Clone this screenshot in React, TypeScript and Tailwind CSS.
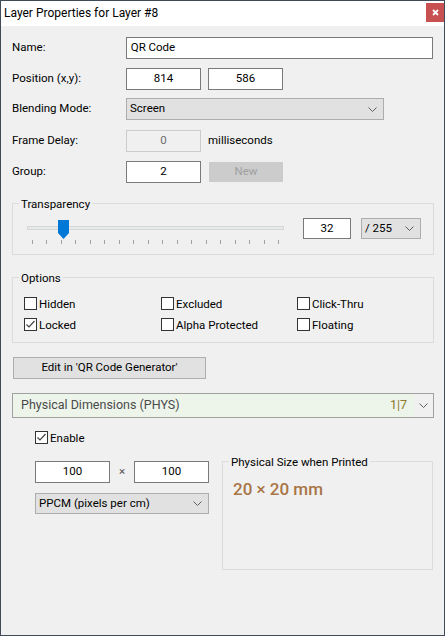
import React from "react";

const font = { fontFamily: 'Roboto, "Noto Sans", sans-serif' };

function Chevron({ className = "" }: { className?: string }) {
  return (
    <svg width="9" height="5" viewBox="0 0 9 5" className={className}>
      <polyline points="0.5,0.5 4.5,4.5 8.5,0.5" fill="none" stroke="#606060" strokeWidth="1" />
    </svg>
  );
}

function CheckBox({ checked = false, label }: { checked?: boolean; label: string }) {
  return (
    <div className="flex items-center h-[13px]">
      <div className="w-[13px] h-[13px] border border-[#333333] bg-white flex items-center justify-center shrink-0">
        {checked && (
          <svg width="11" height="11" viewBox="0 0 11 11">
            <polyline points="1.5,5.5 4,8 9.5,2" fill="none" stroke="#444444" strokeWidth="1.2" />
          </svg>
        )}
      </div>
      <span className="ml-[2px] text-[11.5px] leading-[16px] text-black">{label}</span>
    </div>
  );
}

function GroupBox({
  title,
  className = "",
  children,
}: {
  title: string;
  className?: string;
  children?: React.ReactNode;
}) {
  return (
    <div className={`relative border border-[#dcdcdc] ${className}`}>
      <span className="absolute left-[6px] -top-[8px] px-[2px] bg-[#f0f0f0] text-[11.5px] leading-[16px] text-black">
        {title}
      </span>
      {children}
    </div>
  );
}

function Field({
  value,
  className = "",
  align = "center",
  disabled = false,
}: {
  value: string;
  className?: string;
  align?: "center" | "left";
  disabled?: boolean;
}) {
  return (
    <div
      className={`h-[22px] border flex items-center text-[11.5px] ${
        disabled ? "border-[#cccccc] bg-[#f0f0f0] text-[#6d6d6d]" : "border-[#7a7a7a] bg-white text-black"
      } ${align === "center" ? "justify-center" : "justify-start pl-[4px]"} ${className}`}
    >
      {value}
    </div>
  );
}

function Select({ value, className = "" }: { value: string; className?: string }) {
  return (
    <div
      className={`border border-[#adadad] bg-[#e1e1e1] flex items-center justify-between pl-[3px] pr-[6px] text-[11.5px] text-black ${className}`}
    >
      <span>{value}</span>
      <Chevron />
    </div>
  );
}

function Row({ label, children, className = "" }: { label: string; children: React.ReactNode; className?: string }) {
  return (
    <div className={`flex items-center ${className}`}>
      <span className="w-[114px] text-[11.5px] text-black">{label}</span>
      {children}
    </div>
  );
}

export default function App() {
  const ticks = Array.from({ length: 18 });
  return (
    <div style={font} className="w-[445px] h-[636px] border border-[#3f4c58] bg-[#f0f0f0] flex flex-col overflow-hidden">
      {/* title bar */}
      <div className="h-[25px] bg-white flex items-start justify-between shrink-0">
        <span className="pl-[3px] pt-[4px] text-[12px] leading-[16px] text-black">Layer Properties for Layer #8</span>
        <div className="mt-[2px] w-[18px] h-[19px] bg-[#c75050] flex items-center justify-center">
          <svg width="7" height="7" viewBox="0 0 7 7">
            <path d="M1 1 L6 6 M6 1 L1 6" stroke="white" strokeWidth="1.8" />
          </svg>
        </div>
      </div>

      <div className="flex flex-col px-[11px]">
        <Row label="Name:" className="mt-[11px]">
          <Field value="QR Code" align="left" className="w-[308px]" />
        </Row>
        <Row label="Position (x,y):" className="mt-[9px]">
          <Field value="814" className="w-[75px]" />
          <Field value="586" className="w-[75px] ml-[7px]" />
        </Row>
        <Row label="Blending Mode:" className="mt-[8px]">
          <Select value="Screen" className="w-[258px] h-[22px]" />
        </Row>
        <Row label="Frame Delay:" className="mt-[10px]">
          <Field value="0" disabled className="w-[75px]" />
          <span className="ml-[7px] text-[11.5px] text-black">milliseconds</span>
        </Row>
        <Row label="Group:" className="mt-[9px]">
          <Field value="2" className="w-[75px]" />
          <div className="ml-[8px] w-[74px] h-[20px] bg-[#cccccc] flex items-center justify-center text-[11.5px] text-[#a0a0a0]">
            New
          </div>
        </Row>

        {/* transparency */}
        <GroupBox title="Transparency" className="mt-[20px] w-[422px] h-[52px]">
          <div className="flex items-start pt-[14px] pl-[14px]">
            <div className="relative w-[257px] h-[26px]">
              <div className="mt-[8px] h-[4px] border border-[#d6d6d6] bg-[#e7eaea]" />
              <div className="mt-[10px] ml-[5px] w-[247px] flex justify-between">
                {ticks.map((_, i) => (
                  <div key={i} className="w-px h-[4px] bg-[#a0a0a0]" />
                ))}
              </div>
              <svg className="absolute left-[31px] top-[2px]" width="11" height="19" viewBox="0 0 11 19">
                <polygon points="0,0 11,0 11,13 5.5,19 0,13" fill="#0078d7" />
              </svg>
            </div>
            <Field value="32" className="ml-[19px] w-[48px] !h-[21px]" />
            <Select value="/ 255" className="ml-[10px] w-[60px] h-[21px]" />
          </div>
        </GroupBox>

        {/* options */}
        <GroupBox title="Options" className="mt-[22px] w-[422px] h-[66px]">
          <div className="grid grid-cols-[137px_136px_1fr] gap-y-[8px] pt-[19px] pl-[11px]">
            <CheckBox label="Hidden" />
            <CheckBox label="Excluded" />
            <CheckBox label="Click-Thru" />
            <CheckBox label="Locked" checked />
            <CheckBox label="Alpha Protected" />
            <CheckBox label="Floating" />
          </div>
        </GroupBox>

        <div className="mt-[14px] ml-[1px] w-[193px] h-[22px] border border-[#adadad] bg-[#e1e1e1] flex items-center justify-center text-[11.5px] text-black">
          Edit in 'QR Code Generator'
        </div>

        {/* chunk header */}
        <div className="mt-[14px] w-[422px] h-[25px] border border-[#a0a0a0] flex items-stretch">
          <div className="flex-1 bg-[#edf5ea] flex items-center justify-between pl-[8px] pr-[7px]">
            <span className="text-[12.5px] text-[#4a4a4a]">Physical Dimensions (PHYS)</span>
            <span className="text-[12.5px] text-[#8c7a2e]">1|7</span>
          </div>
          <div className="w-[19px] flex items-center justify-center">
            <Chevron />
          </div>
        </div>

        <div className="mt-[13px] ml-[23px]">
          <CheckBox label="Enable" checked />
        </div>

        <div className="mt-[17px] flex items-start">
          <div className="ml-[23px] w-[174px] flex flex-col">
            <div className="flex items-center">
              <Field value="100" className="w-[75px]" />
              <span className="w-[24px] text-center text-[11.5px] text-[#505050]">×</span>
              <Field value="100" className="w-[75px]" />
            </div>
            <Select value="PPCM (pixels per cm)" className="mt-[10px] w-[174px] h-[21px]" />
          </div>
          <GroupBox title="Physical Size when Printed" className="ml-[13px] w-[212px] h-[109px]">
            <div className="pt-[15px] pl-[10px] text-[17px] leading-[24px] font-medium text-[#a87545]">
              20 × 20 mm
            </div>
          </GroupBox>
        </div>
      </div>
    </div>
  );
}
